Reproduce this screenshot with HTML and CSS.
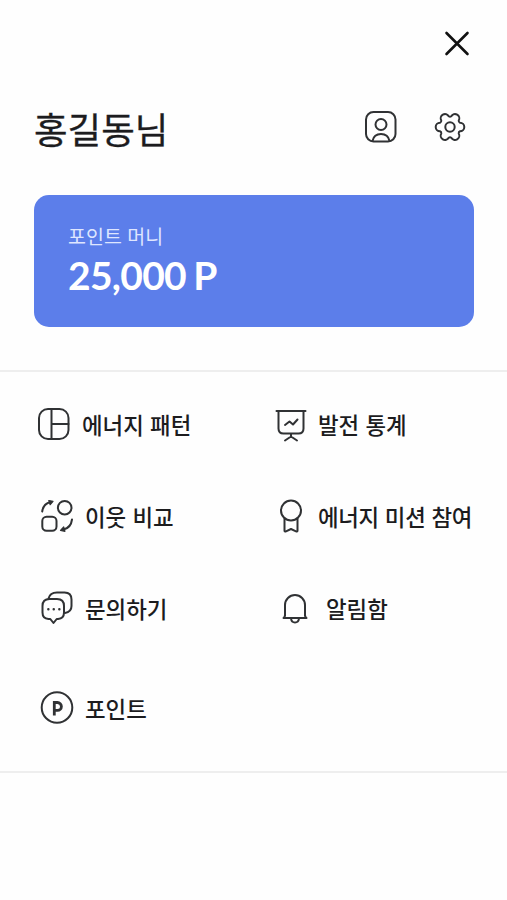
FILE: index.html
```html
<!DOCTYPE html>
<html lang="ko">
<head>
<meta charset="utf-8">
<title>메뉴</title>
<link rel="stylesheet" href="styles.css">
</head>
<body>
<header class="topbar">
  <svg class="icon close" viewBox="0 0 36 36"><path d="M7.5 7 28.5 28M28.5 7 7.5 28"/></svg>
</header>
<section class="profile">
  <h1 class="name">홍길동님</h1>
  <svg class="icon" viewBox="0 0 36 36"><rect x="3" y="3" width="29.5" height="29.5" rx="7.5"/><circle cx="18" cy="15.5" r="5.5"/><path d="M9.5 32C10.5 27 14 25 18 25s7.5 2 8.5 7"/></svg>
  <svg class="icon" viewBox="-18 -18 36 36"><circle r="4.7"/><path d="M10 -4.3A4.3 4.3 0 0 1 10 4.3A2 2 0 0 0 8.73 6.5A4.3 4.3 0 0 1 1.27 10.8A2 2 0 0 0 -1.27 10.8A4.3 4.3 0 0 1 -8.73 6.5A2 2 0 0 0 -10 4.3A4.3 4.3 0 0 1 -10 -4.3A2 2 0 0 0 -8.73 -6.5A4.3 4.3 0 0 1 -1.27 -10.8A2 2 0 0 0 1.27 -10.8A4.3 4.3 0 0 1 8.73 -6.5A2 2 0 0 0 10 -4.3Z"/></svg>
</section>
<section class="card">
  <p class="card-label">포인트 머니</p>
  <p class="card-value">25,000 P</p>
</section>
<nav class="menu">
  <a class="item pattern"><svg class="icon" viewBox="0 0 36 36"><rect x="3" y="3" width="29.5" height="30" rx="9"/><path d="M15.5 3v30M15.5 18h17"/></svg><span>에너지 패턴</span></a>
  <a class="item stats"><svg class="icon" viewBox="0 0 36 36"><path d="M2.5 5h29M4.5 5V22.500q0 5 5 5h15q5 0 5-5V5M17 27.500v3M11 34.500 17 30.500l6 4M11 19l4.500-3.500 3.500 3 4.500-5"/></svg><span>발전 통계</span></a>
  <a class="item compare"><svg class="icon" viewBox="0 0 36 36"><circle cx="25.700" cy="9.700" r="6.800"/><rect x="3.300" y="18.700" width="14.200" height="14" rx="4.300"/><path d="M3.200 13.500C4 8 7 5 11.500 4M33 21.500c-.7 5.500-4 9-8.500 10"/><path class="tip" d="M9.800 2.500 14 3.300l-2.800 3.400ZM26 33.300l-4.500-.9 3.200-3.400Z"/></svg><span>이웃 비교</span></a>
  <a class="item mission"><svg class="icon" viewBox="0 0 36 36"><circle cx="17" cy="12.500" r="10"/><path d="M10.500 20.500v12q0 1.500 1.500.8L17 31l5 2.300q1.500.7 1.500-.8v-12"/></svg><span>에너지 미션 참여</span></a>
  <a class="item inquiry"><svg class="icon" viewBox="0 0 36 36"><path d="M10.500 9h7.500q7 0 7 7v6.500q0 6-6 6.500h-1.300L14.500 33l-3.200-4H9.500q-6-.5-6-6.500V16q0-7 7-7Z"/><path d="M9.500 8.500q1.500-6 8.500-6h7.500q7 0 7 7v6.500q0 6-6.500 7"/><path class="dots" d="M9.300 19.200h.1M14.700 19.200h.1M20.300 19.200h.1"/></svg><span>문의하기</span></a>
  <a class="item alerts"><svg class="icon" viewBox="0 0 36 36"><path d="M8 26V15a10 10 0 0 1 20 0V26M6.500 28q1.500-1 1.500-3M29.500 28q-1.500-1-1.500-3M6.500 28h23M14 28.500q.5 4 4 4t4-4"/></svg><span>알림함</span></a>
  <a class="item point"><svg class="icon" viewBox="0 0 36 36"><circle cx="18" cy="17.500" r="15.300"/><path class="mark" d="M15.300 25.500V12.500h3.200a3.900 3.900 0 0 1 0 7.800h-3.200"/></svg><span>포인트</span></a>
</nav>
</body>
</html>
```

FILE: styles.css
```css
* { box-sizing: border-box; }
body {
  margin: 0;
  height: 900px;
  background: #fefefe;
  color: #1c1c1e;
  font-family: "Noto Sans CJK KR", sans-serif;
}
h1, p { margin: 0; }
.icon {
  width: 36px;
  height: 36px;
  flex: none;
  fill: none;
  stroke: #303234;
  stroke-width: 2;
  stroke-linecap: round;
  stroke-linejoin: round;
}
.topbar {
  display: flex;
  justify-content: flex-end;
  height: 100px;
  padding: 26px 32px 0 0;
}
.close { stroke: #111; stroke-width: 2.6; }
.profile {
  display: flex;
  align-items: center;
  gap: 33px;
  height: 54px;
  padding: 0 39px 0 34px;
}
.name {
  flex: 1;
  font-size: 36.5px;
  line-height: 54px;
  font-weight: 400;
  padding-top: 4px;
  -webkit-text-stroke: 0.3px currentColor;
}
.card {
  height: 132px;
  margin: 41px 33px 43px 34px;
  padding: 26px 34px;
  border-radius: 15px;
  background: #5c7eea;
  color: #fff;
}
.card-label { font-size: 19.5px; line-height: 30px; font-weight: 400; color: #dfe6ff; }
.card-value {
  font-family: Lato, sans-serif;
  font-size: 39px;
  line-height: 48px;
  font-weight: 700;
  letter-spacing: -0.7px;
  word-spacing: -1.5px;
}
.menu {
  display: grid;
  grid-template-columns: 238px 1fr;
  grid-template-rows: 92px 92px 92px 108px;
  height: 403px;
  padding: 6px 0 0 36px;
  border-top: 2px solid #eee;
  border-bottom: 2px solid #eee;
}
.item {
  display: flex;
  align-items: center;
  gap: 10px;
  font-size: 22.4px;
  font-weight: 500;
  white-space: nowrap;
}
.compare, .inquiry, .point { padding-left: 3px; }
.stats, .mission { gap: 8px; }
.mission { letter-spacing: -0.3px; }
.alerts { padding-left: 3px; gap: 13px; }
.dots { stroke-width: 2.4; }
.tip { fill: #303234; stroke-width: 1.2; }
.mark { stroke-width: 2.8; stroke-linecap: butt; stroke-linejoin: miter; }
```
